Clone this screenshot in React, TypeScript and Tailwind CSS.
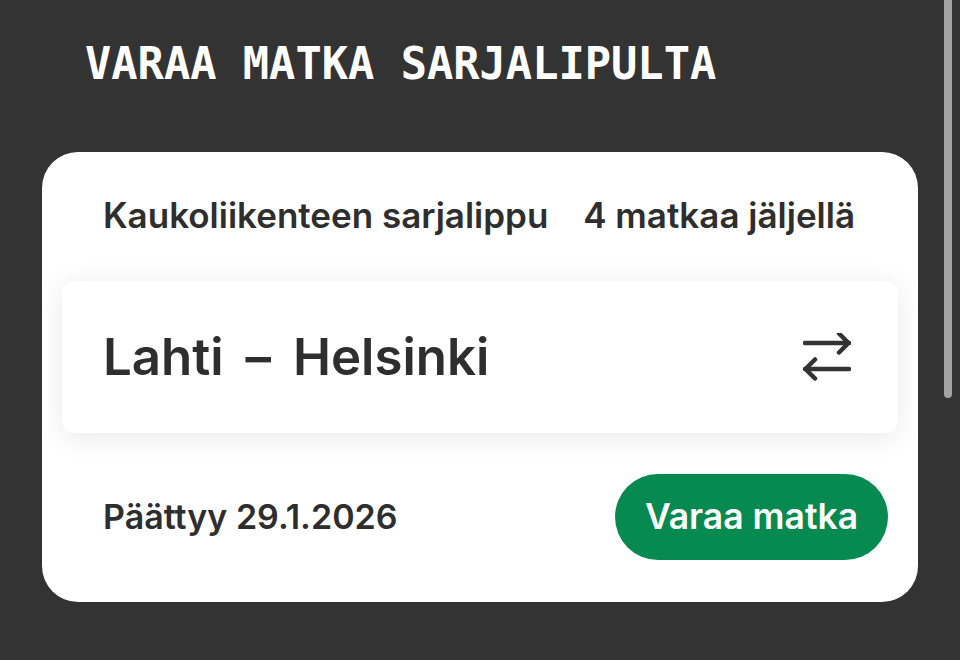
import React from 'react'

function SwapIcon() {
  return (
    <svg width="48" height="48" viewBox="0 0 48 48" fill="none" stroke="#333333" strokeWidth="4.5" strokeLinecap="round" strokeLinejoin="round">
      <path d="M2 10H46" />
      <path d="M36 0.5L45.5 10L36 19.5" />
      <path d="M2 36H46" />
      <path d="M12 26.5L2.5 36L12 45.5" />
    </svg>
  )
}

export default function App() {
  return (
    <div className="relative h-[660px] w-[960px] overflow-hidden bg-[#333333] font-['Inter','Noto_Sans',sans-serif] text-[#2e2e2e]">
      {/* scrollbar */}
      <div className="absolute right-[8px] top-[-10px] h-[408px] w-[8px] rounded-full bg-[#a3a3a3]" />

      <div className="pl-[85px] pt-[42px]">
        <h1 className="font-['DejaVu_Sans_Mono',monospace] text-[43.7px] font-bold leading-none text-white">
          VARAA MATKA SARJALIPULTA
        </h1>
      </div>

      <div className="ml-[42px] mt-[66px] h-[450px] w-[876px] rounded-[36px] bg-white px-[20px]">
        <div className="flex items-center justify-between px-[41px] pt-[46px] text-[35px] font-semibold leading-none">
          <span>Kaukoliikenteen sarjalippu</span>
          <span className="mr-[2px]">4 matkaa jäljellä</span>
        </div>

        <div className="mt-[48px] flex h-[152px] items-center justify-between rounded-[12px] bg-white pl-[41px] pr-[47px] shadow-[0_4px_28px_rgba(0,0,0,0.09)]">
          <span className="text-[51px] font-semibold leading-none">
            Lahti <span className="mx-[9px]">–</span> Helsinki
          </span>
          <SwapIcon />
        </div>

        <div className="mt-[41px] flex items-center justify-between pl-[41px] pr-[10px]">
          <span className="text-[34px] font-semibold leading-none">Päättyy 29.1.2026</span>
          <button className="flex h-[86px] w-[273px] items-center justify-center rounded-full bg-[#078a4f] text-[35.5px] font-semibold leading-none text-white">
            Varaa matka
          </button>
        </div>
      </div>
    </div>
  )
}
